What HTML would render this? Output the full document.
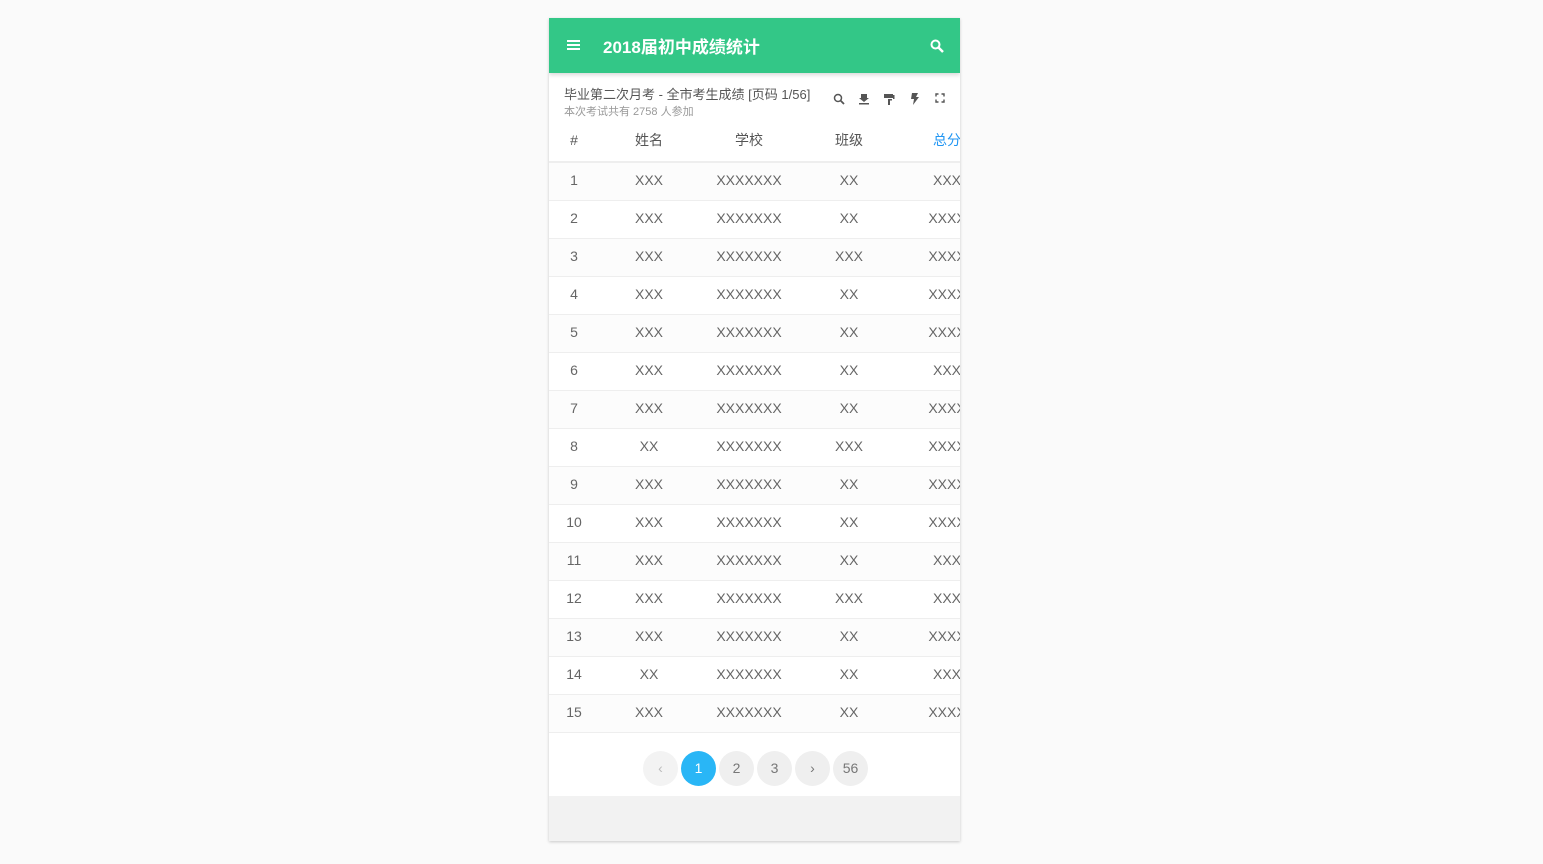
<!DOCTYPE html>
<html><head><meta charset="utf-8"><style>
body{margin:0;background:#fafafa;font-family:"Liberation Sans","Noto Sans CJK SC",sans-serif;}
.card{position:absolute;left:549px;top:18px;width:411px;height:823px;background:#f2f2f2;box-shadow:0 1px 3px rgba(0,0,0,.2);overflow:hidden}
.hd{height:55px;background:#33c787;color:#fff;position:relative;box-shadow:0 2px 4px rgba(0,0,0,.15)}
.hd .t{position:absolute;left:54px;top:15px;font-size:17px;font-weight:bold}
.body{background:#fff}
.sub{position:relative;height:46px}
.s1{position:absolute;left:15px;top:11px;font-size:13px;color:#555}
.s2{position:absolute;left:15px;top:30px;font-size:11px;color:#999}
.ic{position:absolute;top:20px}
table{border-collapse:collapse;table-layout:fixed;width:446px}
td,th{text-align:center;font-weight:normal;color:#666;font-size:14px;padding:0;white-space:nowrap;overflow:hidden}
th{height:42px;font-size:14px;color:#555;border-bottom:2px solid #eee}
td{height:34px;padding-bottom:3px;border-bottom:1px solid #eee}
tr:nth-child(even) td{background:#fcfcfc}
.pg{height:63px;position:relative;background:#fff}
.b{position:absolute;top:18px;width:35px;height:35px;border-radius:50%;background:#efefef;color:#777;font-size:14px;text-align:center;line-height:35px}
</style></head><body>
<div class="card">
<div class="hd">
<svg style="position:absolute;left:18px;top:22px" width="13" height="10"><rect y="0" width="13" height="2" fill="#fff"/><rect y="4" width="13" height="2" fill="#fff"/><rect y="8" width="13" height="2" fill="#fff"/></svg>
<div class="t">2018届初中成绩统计</div>
<svg style="position:absolute;left:381px;top:21px" width="14" height="14"><circle cx="5.5" cy="5.5" r="4" stroke="#fff" stroke-width="2" fill="none"/><path d="M8.5 8.5L13 13" stroke="#fff" stroke-width="2.5"/></svg>
</div>
<div class="body">
<div class="sub"><div class="s1">毕业第二次月考 - 全市考生成绩 [页码 1/56]</div><div class="s2">本次考试共有 2758 人参加</div>
<svg class="ic" style="left:284px" width="12" height="12"><circle cx="5" cy="5" r="3.5" stroke="#555" stroke-width="1.5" fill="none"/><path d="M7.5 7.5L11 11" stroke="#555" stroke-width="1.8"/></svg>
<svg class="ic" style="left:309px" width="12" height="12"><path d="M3 1h6v4h2L6 9 1 5h2z" fill="#555"/><rect x="1" y="10" width="10" height="1.5" fill="#555"/></svg>
<svg class="ic" style="left:334px" width="12" height="12"><rect x="1" y="1" width="9" height="4" fill="#555"/><rect x="10" y="2" width="1.5" height="4" fill="#555"/><rect x="5" y="6" width="4" height="1.5" fill="#555"/><rect x="5" y="6" width="2" height="6" fill="#555"/></svg>
<svg class="ic" style="left:360px" width="12" height="12"><path d="M3 0h6L7 4h3L4 12l1-6H2z" fill="#555"/></svg>
<svg class="ic" style="left:386px" width="10" height="10"><path d="M1 3.5V1h2.5M6.5 1H9v2.5M9 6.5V9H6.5M3.5 9H1V6.5" stroke="#555" stroke-width="1.4" fill="none"/></svg>
</div>
<table><colgroup><col style="width:50px"><col style="width:100px"><col style="width:100px"><col style="width:100px"><col style="width:96px"></colgroup>
<tr><th>#</th><th>姓名</th><th>学校</th><th>班级</th><th style="color:#2196f3">总分</th></tr>
<tr><td>1</td><td>XXX</td><td>XXXXXXX</td><td>XX</td><td>XXX</td></tr>
<tr><td>2</td><td>XXX</td><td>XXXXXXX</td><td>XX</td><td>XXXX</td></tr>
<tr><td>3</td><td>XXX</td><td>XXXXXXX</td><td>XXX</td><td>XXXX</td></tr>
<tr><td>4</td><td>XXX</td><td>XXXXXXX</td><td>XX</td><td>XXXX</td></tr>
<tr><td>5</td><td>XXX</td><td>XXXXXXX</td><td>XX</td><td>XXXX</td></tr>
<tr><td>6</td><td>XXX</td><td>XXXXXXX</td><td>XX</td><td>XXX</td></tr>
<tr><td>7</td><td>XXX</td><td>XXXXXXX</td><td>XX</td><td>XXXX</td></tr>
<tr><td>8</td><td>XX</td><td>XXXXXXX</td><td>XXX</td><td>XXXX</td></tr>
<tr><td>9</td><td>XXX</td><td>XXXXXXX</td><td>XX</td><td>XXXX</td></tr>
<tr><td>10</td><td>XXX</td><td>XXXXXXX</td><td>XX</td><td>XXXX</td></tr>
<tr><td>11</td><td>XXX</td><td>XXXXXXX</td><td>XX</td><td>XXX</td></tr>
<tr><td>12</td><td>XXX</td><td>XXXXXXX</td><td>XXX</td><td>XXX</td></tr>
<tr><td>13</td><td>XXX</td><td>XXXXXXX</td><td>XX</td><td>XXXX</td></tr>
<tr><td>14</td><td>XX</td><td>XXXXXXX</td><td>XX</td><td>XXX</td></tr>
<tr><td>15</td><td>XXX</td><td>XXXXXXX</td><td>XX</td><td>XXXX</td></tr>
</table>
<div class="pg">
<div class="b" style="left:94px;background:#f3f3f3;color:#bbb">‹</div>
<div class="b" style="left:132px;background:#29b6f6;color:#fff">1</div>
<div class="b" style="left:170px">2</div>
<div class="b" style="left:208px">3</div>
<div class="b" style="left:246px">›</div>
<div class="b" style="left:284px">56</div>
</div>
</div>
</div>
</body></html>
